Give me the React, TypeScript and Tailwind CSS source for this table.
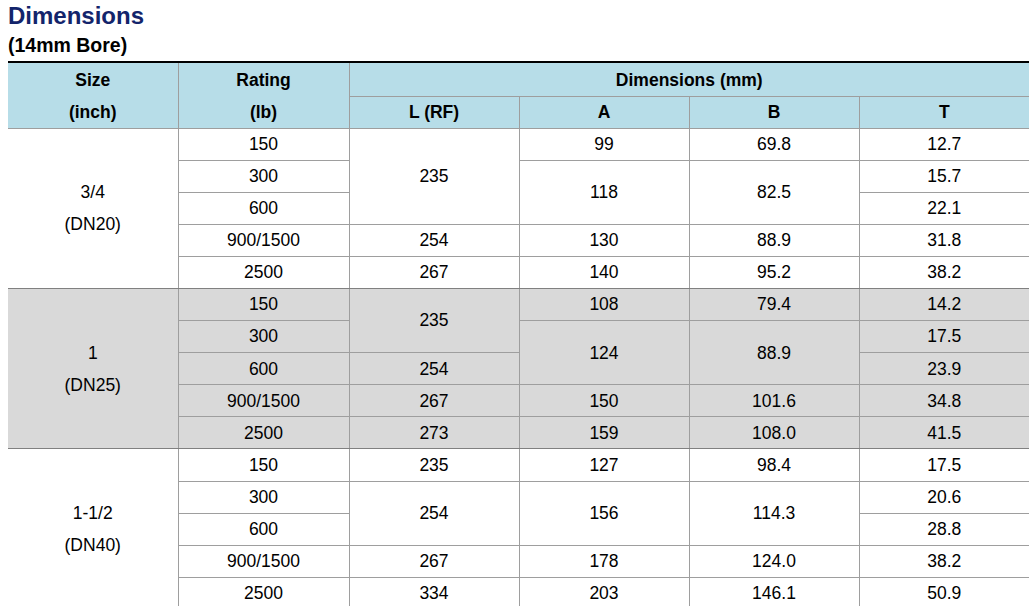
type Cell = { v: string; rs?: number };
type Row = Cell[];

interface Section {
  size: string;
  dn: string;
  grey: boolean;
  rows: Row[];
}

const SECTIONS: Section[] = [
  {
    size: "3/4",
    dn: "(DN20)",
    grey: false,
    rows: [
      [{ v: "150" }, { v: "235", rs: 3 }, { v: "99" }, { v: "69.8" }, { v: "12.7" }],
      [{ v: "300" }, { v: "118", rs: 2 }, { v: "82.5", rs: 2 }, { v: "15.7" }],
      [{ v: "600" }, { v: "22.1" }],
      [{ v: "900/1500" }, { v: "254" }, { v: "130" }, { v: "88.9" }, { v: "31.8" }],
      [{ v: "2500" }, { v: "267" }, { v: "140" }, { v: "95.2" }, { v: "38.2" }],
    ],
  },
  {
    size: "1",
    dn: "(DN25)",
    grey: true,
    rows: [
      [{ v: "150" }, { v: "235", rs: 2 }, { v: "108" }, { v: "79.4" }, { v: "14.2" }],
      [{ v: "300" }, { v: "124", rs: 2 }, { v: "88.9", rs: 2 }, { v: "17.5" }],
      [{ v: "600" }, { v: "254" }, { v: "23.9" }],
      [{ v: "900/1500" }, { v: "267" }, { v: "150" }, { v: "101.6" }, { v: "34.8" }],
      [{ v: "2500" }, { v: "273" }, { v: "159" }, { v: "108.0" }, { v: "41.5" }],
    ],
  },
  {
    size: "1-1/2",
    dn: "(DN40)",
    grey: false,
    rows: [
      [{ v: "150" }, { v: "235" }, { v: "127" }, { v: "98.4" }, { v: "17.5" }],
      [{ v: "300" }, { v: "254", rs: 2 }, { v: "156", rs: 2 }, { v: "114.3", rs: 2 }, { v: "20.6" }],
      [{ v: "600" }, { v: "28.8" }],
      [{ v: "900/1500" }, { v: "267" }, { v: "178" }, { v: "124.0" }, { v: "38.2" }],
      [{ v: "2500" }, { v: "334" }, { v: "203" }, { v: "146.1" }, { v: "50.9" }],
    ],
  },
];

const td = "h-[32.1px] p-0 text-center align-middle border border-[#9e9e9e]";
const th = "p-0 text-center align-middle font-bold border border-[#9e9e9e]";

export default function App() {
  return (
    <div
      className="w-[1036px] h-[606px] overflow-hidden bg-white text-black"
      style={{ fontFamily: '"Liberation Sans", Arial, sans-serif' }}
    >
      <div className="pl-2 pt-[1px]">
        <h1 className="text-[24px] leading-[30px] font-bold text-[#13246b]">Dimensions</h1>
        <p className="text-[19.5px] leading-[26px] font-bold mt-[1px]">(14mm Bore)</p>
      </div>
      <div className="pl-2 mt-[3px] w-[1029px]">
        <table className="w-full table-fixed border-collapse text-[17.5px] border-t-2 border-t-black">
          <colgroup>
            <col className="w-[170px]" />
            <col className="w-[171px]" />
            <col className="w-[170px]" />
            <col className="w-[170px]" />
            <col className="w-[170px]" />
            <col className="w-[170px]" />
          </colgroup>
          <thead className="bg-[#b7dde8]">
            <tr className="h-[34px]">
              <th className={th + " pt-[2px] border-l-0 border-t-black border-t-2 border-b-0"}>Size</th>
              <th className={th + " pt-[2px] border-t-black border-t-2 border-b-0"}>Rating</th>
              <th colSpan={4} className={th + " pt-[2px] border-r-0 border-t-black border-t-2"}>
                Dimensions (mm)
              </th>
            </tr>
            <tr className="h-8">
              <th className={th + " border-l-0 border-t-0"}>(inch)</th>
              <th className={th + " border-t-0"}>(lb)</th>
              <th className={th}>L (RF)</th>
              <th className={th}>A</th>
              <th className={th}>B</th>
              <th className={th + " border-r-0"}>T</th>
            </tr>
          </thead>
          <tbody>
            {SECTIONS.map((s) =>
              s.rows.map((row, i) => (
                <tr key={s.size + i} className={s.grey ? "bg-[#d9d9d9]" : "bg-white"}>
                  {i === 0 && (
                    <td rowSpan={5} className={td + " border-l-0 border-b-[#808080] leading-8"}>
                      {s.size}
                      <br />
                      {s.dn}
                    </td>
                  )}
                  {row.map((c, j) => (
                    <td
                      key={j}
                      rowSpan={c.rs}
                      className={
                        td +
                        (j === row.length - 1 ? " border-r-0" : "") +
                        (i + (c.rs ?? 1) === 5 ? " border-b-[#808080]" : "")
                      }
                    >
                      {c.v}
                    </td>
                  ))}
                </tr>
              ))
            )}
          </tbody>
        </table>
      </div>
    </div>
  );
}
